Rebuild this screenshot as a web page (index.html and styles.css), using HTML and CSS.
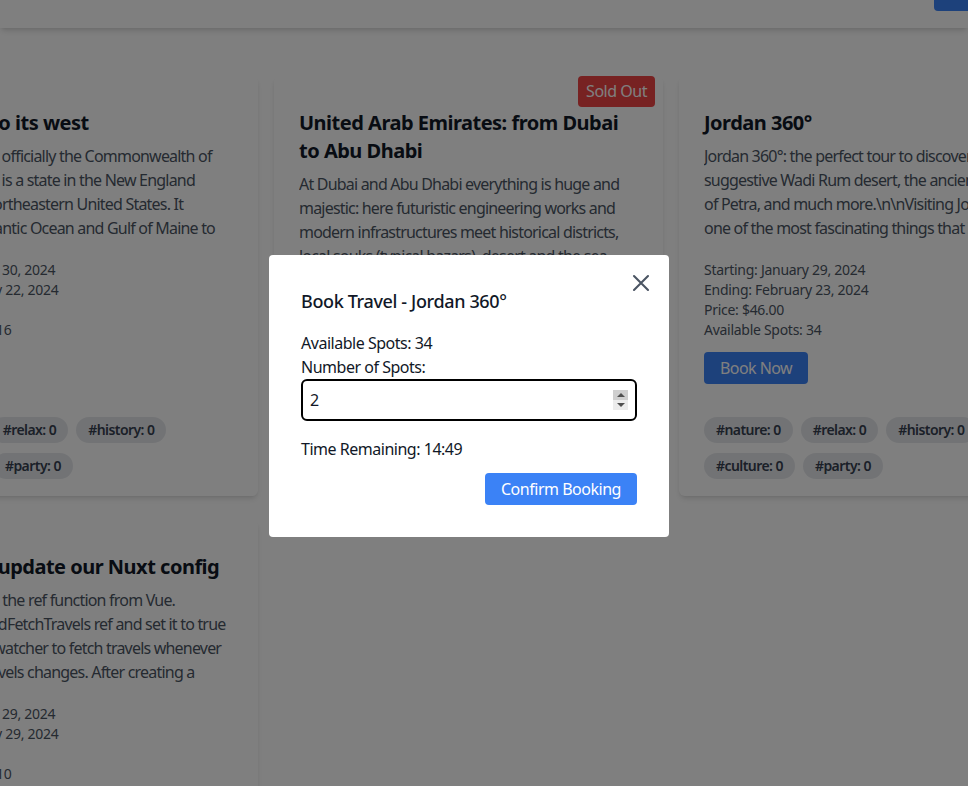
FILE: index.html
```html
<!DOCTYPE html>
<html lang="en">
<head>
<meta charset="utf-8">
<title>Travels</title>
<link rel="stylesheet" href="styles.css">
</head>
<body>
<header class="topbar">
  <a class="top-btn" href="#">Login</a>
</header>

<main class="grid">
  <article class="card">
    <h2 class="card-title">New York to its west</h2>
    <p class="card-desc">Massachusetts, officially the Commonwealth of Massachusetts, is a state in the New England region of the northeastern United States. It borders the Atlantic Ocean and Gulf of Maine to the east, Connecticut and Rhode Island to its south.</p>
    <div class="card-meta">
      <p>Starting: January 30, 2024</p>
      <p>Ending: February 22, 2024</p>
      <p>Price: $32.00</p>
      <p>Available Spots: 16</p>
    </div>
    <div class="tags">
      <span class="tag">#nature: 0</span>
      <span class="tag">#relax: 0</span>
      <span class="tag">#history: 0</span>
      <span class="tag">#culture: 0</span>
      <span class="tag">#party: 0</span>
    </div>
  </article>

  <article class="card">
    <span class="badge">Sold Out</span>
    <h2 class="card-title">United Arab Emirates: from Dubai to Abu Dhabi</h2>
    <p class="card-desc">At Dubai and Abu Dhabi everything is huge and majestic: here futuristic engineering works and modern infrastructures meet historical districts, local souks (typical bazars), desert and the sea, everything within a few kilometres.</p>
    <div class="card-meta">
      <p>Starting: February 12, 2024</p>
      <p>Ending: February 20, 2024</p>
      <p>Price: $120.00</p>
      <p>Available Spots: 0</p>
    </div>
    <div class="tags">
      <span class="tag">#nature: 0</span>
      <span class="tag">#relax: 0</span>
      <span class="tag">#history: 0</span>
      <span class="tag">#culture: 0</span>
      <span class="tag">#party: 0</span>
    </div>
  </article>

  <article class="card">
    <h2 class="card-title">Jordan 360°</h2>
    <p class="card-desc">Jordan 360°: the perfect tour to discover the suggestive Wadi Rum desert, the ancient temples of Petra, and much more.\n\nVisiting Jordan was one of the most fascinating things that I have done in my life.</p>
    <div class="card-meta">
      <p>Starting: January 29, 2024</p>
      <p>Ending: February 23, 2024</p>
      <p>Price: $46.00</p>
      <p>Available Spots: 34</p>
    </div>
    <button class="book-btn">Book Now</button>
    <div class="tags">
      <span class="tag">#nature: 0</span>
      <span class="tag">#relax: 0</span>
      <span class="tag">#history: 0</span>
      <span class="tag">#culture: 0</span>
      <span class="tag">#party: 0</span>
    </div>
  </article>

  <article class="card">
    <h2 class="card-title">Finally, we update our Nuxt config</h2>
    <p class="card-desc">First, we import the ref function from Vue. Generate shouldFetchTravels ref and set it to true then we add a watcher to fetch travels whenever shouldFetchTravels changes. After creating a composable we can reuse it everywhere.</p>
    <div class="card-meta">
      <p>Starting: January 29, 2024</p>
      <p>Ending: February 29, 2024</p>
      <p>Price: $80.00</p>
      <p>Available Spots: 10</p>
    </div>
    <div class="tags">
      <span class="tag">#nature: 0</span>
      <span class="tag">#relax: 0</span>
      <span class="tag">#history: 0</span>
      <span class="tag">#culture: 0</span>
      <span class="tag">#party: 0</span>
    </div>
  </article>
</main>

<div class="overlay">
  <div class="modal" role="dialog">
    <button class="close-btn" aria-label="Close">
      <svg width="28" height="28" viewBox="0 0 24 24" fill="none" stroke="currentColor" stroke-width="1.8" stroke-linecap="round"><path d="M6 18L18 6M6 6l12 12"/></svg>
    </button>
    <h3 class="modal-title">Book Travel - Jordan 360°</h3>
    <p class="modal-line">Available Spots: 34</p>
    <label class="modal-line" for="spots">Number of Spots:</label>
    <div class="number-field">
      <input id="spots" class="number-input" type="text" value="2">
      <span class="spinner"><span class="spin-up"></span><span class="spin-down"></span></span>
    </div>
    <p class="modal-line time">Time Remaining: 14:49</p>
    <div class="actions">
      <button class="confirm-btn">Confirm Booking</button>
    </div>
  </div>
</div>
</body>
</html>
```

FILE: styles.css
```css
html, body {
  margin: 0;
  height: 786px;
  overflow: hidden;
}
body {
  font-family: "Noto Sans", "Open Sans", sans-serif;
  letter-spacing: -0.03em;
  background: #ffffff;
  color: #111827;
}
p { margin: 0; }

.topbar {
  position: relative;
  z-index: 1;
  height: 28px;
  background: #ffffff;
  box-shadow: 0 4px 6px -1px rgba(0,0,0,.12), 0 2px 4px -2px rgba(0,0,0,.1);
  display: flex;
  justify-content: flex-end;
}
.top-btn {
  display: block;
  box-sizing: border-box;
  height: 40px;
  width: 80px;
  margin-top: -29px;
  margin-right: -46px;
  padding: 4px 16px;
  line-height: 20px;
  border-radius: 4px;
  background: #3b82f6;
  color: #fff;
  text-decoration: none;
}

.grid {
  display: grid;
  grid-template-columns: repeat(3, 389px);
  column-gap: 16px;
  row-gap: 24px;
  margin-left: -131px;
  padding-top: 48px;
}

.card {
  position: relative;
  background: #ffffff;
  border-radius: 6px;
  box-shadow: 0 4px 6px -1px rgba(0,0,0,.1), 0 2px 4px -2px rgba(0,0,0,.1);
  padding: 33px 24px 17px 25px;
  display: flex;
  flex-direction: column;
}
.card-title {
  margin: 0;
  font-size: 20px;
  line-height: 28px;
  font-weight: 700;
  letter-spacing: -0.025em;
  color: #111827;
}
.card-desc {
  margin-top: 7px;
  font-size: 16px;
  line-height: 24px;
  letter-spacing: -0.05em;
  color: #4b5563;
  max-height: 96px;
  overflow: hidden;
}
.card-meta {
  margin-top: 20px;
  font-size: 14px;
  line-height: 20px;
  letter-spacing: -0.02em;
  color: #4b5563;
}
.book-btn {
  align-self: flex-start;
  margin-top: 12px;
  margin-bottom: 17px;
  height: 32px;
  padding: 0 16px;
  border: 0;
  border-radius: 4px;
  background: #3b82f6;
  color: #ffffff;
  font: inherit;
  font-size: 16px;
  letter-spacing: -0.035em;
}
.tags {
  margin-top: auto;
  padding-top: 16px;
  display: flex;
  flex-wrap: wrap;
  gap: 10px 8px;
}
.tag {
  font-size: 14px;
  line-height: 20px;
  font-weight: 600;
  letter-spacing: -0.04em;
  padding: 3px 12px;
  border-radius: 999px;
  background: #e5e7eb;
  color: #374151;
}
.badge {
  position: absolute;
  top: 0;
  right: 8px;
  padding: 4px 8px;
  border-radius: 4px;
  background: #ef4444;
  color: #ffffff;
  font-size: 16px;
  line-height: 23px;
}

.overlay {
  position: fixed;
  inset: 0;
  z-index: 10;
  background: rgba(0,0,0,.5);
  display: flex;
  align-items: center;
  justify-content: center;
  padding: 6px 30px 0 0;
  box-sizing: border-box;
}
.modal {
  position: relative;
  width: 400px;
  box-sizing: border-box;
  background: #ffffff;
  border-radius: 4px;
  padding: 32px;
}
.close-btn {
  position: absolute;
  top: 14px;
  right: 14px;
  width: 28px;
  height: 28px;
  padding: 0;
  border: 0;
  background: none;
  color: #4b5563;
}
.close-btn svg { display: block; }
.modal-title {
  margin: 0 0 16px;
  font-size: 18px;
  line-height: 28px;
  font-weight: 500;
  letter-spacing: -0.02em;
  color: #111827;
}
.modal-line {
  display: block;
  font-size: 16px;
  line-height: 24px;
  color: #111827;
}
.number-field {
  display: flex;
  align-items: center;
  height: 42px;
  box-sizing: border-box;
  border: 2px solid #000000;
  border-radius: 6px;
  padding: 0 7px 0 7px;
}
.number-input {
  flex: 1;
  min-width: 0;
  border: 0;
  outline: none;
  padding: 0;
  font: inherit;
  font-size: 16px;
  color: #111827;
  background: transparent;
}
.spinner {
  display: flex;
  flex-direction: column;
  width: 15px;
  height: 20px;
}
.spin-up, .spin-down {
  flex: 1;
  display: flex;
  align-items: center;
  justify-content: center;
}
.spin-up { background: #cfcfcf; }
.spin-down { background: #ececec; }
.spin-up::before {
  content: "";
  border-left: 4px solid transparent;
  border-right: 4px solid transparent;
  border-bottom: 4px solid #505050;
}
.spin-down::before {
  content: "";
  border-left: 4px solid transparent;
  border-right: 4px solid transparent;
  border-top: 4px solid #505050;
}
.time { margin-top: 16px; }
.actions {
  display: flex;
  justify-content: flex-end;
  margin-top: 12px;
}
.confirm-btn {
  height: 32px;
  padding: 0 16px;
  border: 0;
  border-radius: 4px;
  background: #3b82f6;
  color: #ffffff;
  font: inherit;
  font-size: 16px;
  letter-spacing: -0.03em;
}
```
